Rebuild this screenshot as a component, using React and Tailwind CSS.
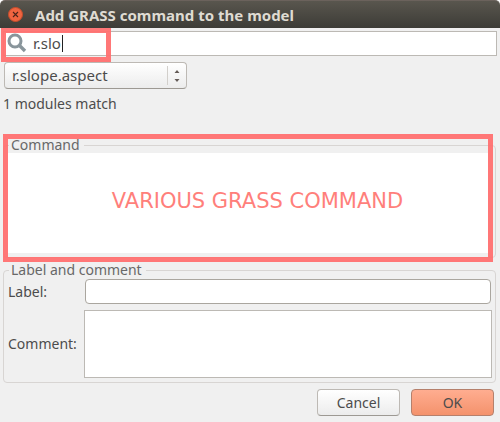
import { useState } from "react";

function Group({ title, className = "", children }) {
  return (
    <fieldset className={`min-w-0 rounded-[4px] border border-[#d8d5d3] pr-[3px] pb-1 pl-1 ${className}`}>
      <legend className="ml-px px-[2px] pr-1 text-sm leading-4 text-[#686868]">{title}</legend>
      {children}
    </fieldset>
  );
}

function TitleBar() {
  return (
    <header className="flex h-7 items-center gap-3 rounded-t-[5px] border-t border-[#6b625c] bg-linear-to-b from-[#59564e] to-[#3d3c37] pl-2">
      <button type="button" aria-label="Close" className="size-[15px] shrink-0">
        <svg viewBox="0 0 15 15" className="size-[15px]">
          <circle cx="7.5" cy="7.5" r="7" fill="#ef6440" stroke="#c64d2b" />
          <path d="M5 5l5 5M10 5l-5 5" stroke="#4a241a" strokeWidth="1.1" fill="none" />
        </svg>
      </button>
      <h1 className="text-[15px] leading-5 font-bold whitespace-nowrap text-[#dfdbd2]">
        Add GRASS command to the model
      </h1>
    </header>
  );
}

export default function App() {
  const [query, setQuery] = useState("r.slo");
  return (
    <div className="bg-white font-['Noto_Sans',sans-serif] text-sm text-[#4c4c4c]">
      <TitleBar />
      <main className="flex flex-col bg-[#f0f0f0] pt-[3px] pr-1 pb-[6px] pl-[3px]">
        <div className="relative -mr-px">
          <input
            type="text"
            aria-label="Search modules"
            value={query}
            onChange={(e) => setQuery(e.target.value)}
            className="block h-[25px] w-full border border-[#bcb9b4] bg-white pb-[2px] pl-[29px] text-[15px] leading-5 outline-none"
          />
          <svg viewBox="0 0 20 20" className="absolute top-[2px] left-[4px] size-5">
            <circle cx="8" cy="8" r="6" fill="none" stroke="#89959b" strokeWidth="3" />
            <path d="M12.5 12.5L18 18" stroke="#89959b" strokeWidth="3.4" />
          </svg>
          <span className="absolute top-1 left-[59px] h-[17px] w-px bg-[#222]" />
          <div className="pointer-events-none absolute -top-[3px] -left-[2px] h-[34px] w-[110px] border-5 border-[#ff7070]/95" />
        </div>

        <div className="relative mt-[6px] ml-px w-[183px]">
          <select
            aria-label="Module"
            className="block h-[27px] w-full appearance-none rounded-[4px] border border-[#bdb9b4] border-b-[#9d9993] bg-linear-to-b from-white to-[#ececec] pr-6 pb-[2px] pl-[7px] text-[15px] leading-5"
          >
            <option>r.slope.aspect</option>
          </select>
          <svg viewBox="0 0 20 19" className="pointer-events-none absolute top-1 right-0 h-[19px] w-5">
            <path d="M0.5 0v19" stroke="#d2cfcb" />
            <path d="M7.500 7h5L10 4zM7.500 13h5L10 16z" fill="#645b57" />
          </svg>
        </div>

        <p className="mt-[5px] leading-5">1 modules match</p>

        <div className="relative mt-[23px]">
          <Group title="Command">
            <div className="flex h-[100px] items-center justify-center bg-white pb-[5px] pl-[15px] font-['DejaVu_Sans',sans-serif] text-[21px] whitespace-nowrap text-[#ff7f7b]">
              <span>VARIOUS GRASS COMMAND</span>
            </div>
          </Group>
          <div className="pointer-events-none absolute -top-[3px] right-[3px] -bottom-1 left-0 border-5 border-[#ff7070]/95" />
        </div>

        <Group title="Label and comment" className="mt-1">
          <div className="grid grid-cols-[76px_1fr] items-center gap-y-[6px] pt-px">
            <label htmlFor="label">Label:</label>
            <input
              id="label"
              type="text"
              className="mx-px h-[25px] min-w-0 rounded-[4px] border border-[#aaa69f] bg-white px-1 outline-none"
            />
            <label htmlFor="comment">Comment:</label>
            <textarea
              id="comment"
              className="block h-[68px] w-full resize-none border border-[#bcb9b4] bg-white px-1 outline-none"
            />
          </div>
        </Group>

        <div className="mt-[6px] mr-[2px] flex justify-end gap-[11px]">
          <button
            type="button"
            className="h-[27px] w-[83px] rounded-[4px] border border-[#bdb9b4] border-b-[#9d9993] bg-linear-to-b from-white to-[#ececec] leading-5"
          >
            Cancel
          </button>
          <button
            type="button"
            className="h-[27px] w-[83px] rounded-[4px] border border-[#b5806c] bg-linear-to-b from-[#ffad90] to-[#f4926c] leading-5"
          >
            OK
          </button>
        </div>
      </main>
    </div>
  );
}
